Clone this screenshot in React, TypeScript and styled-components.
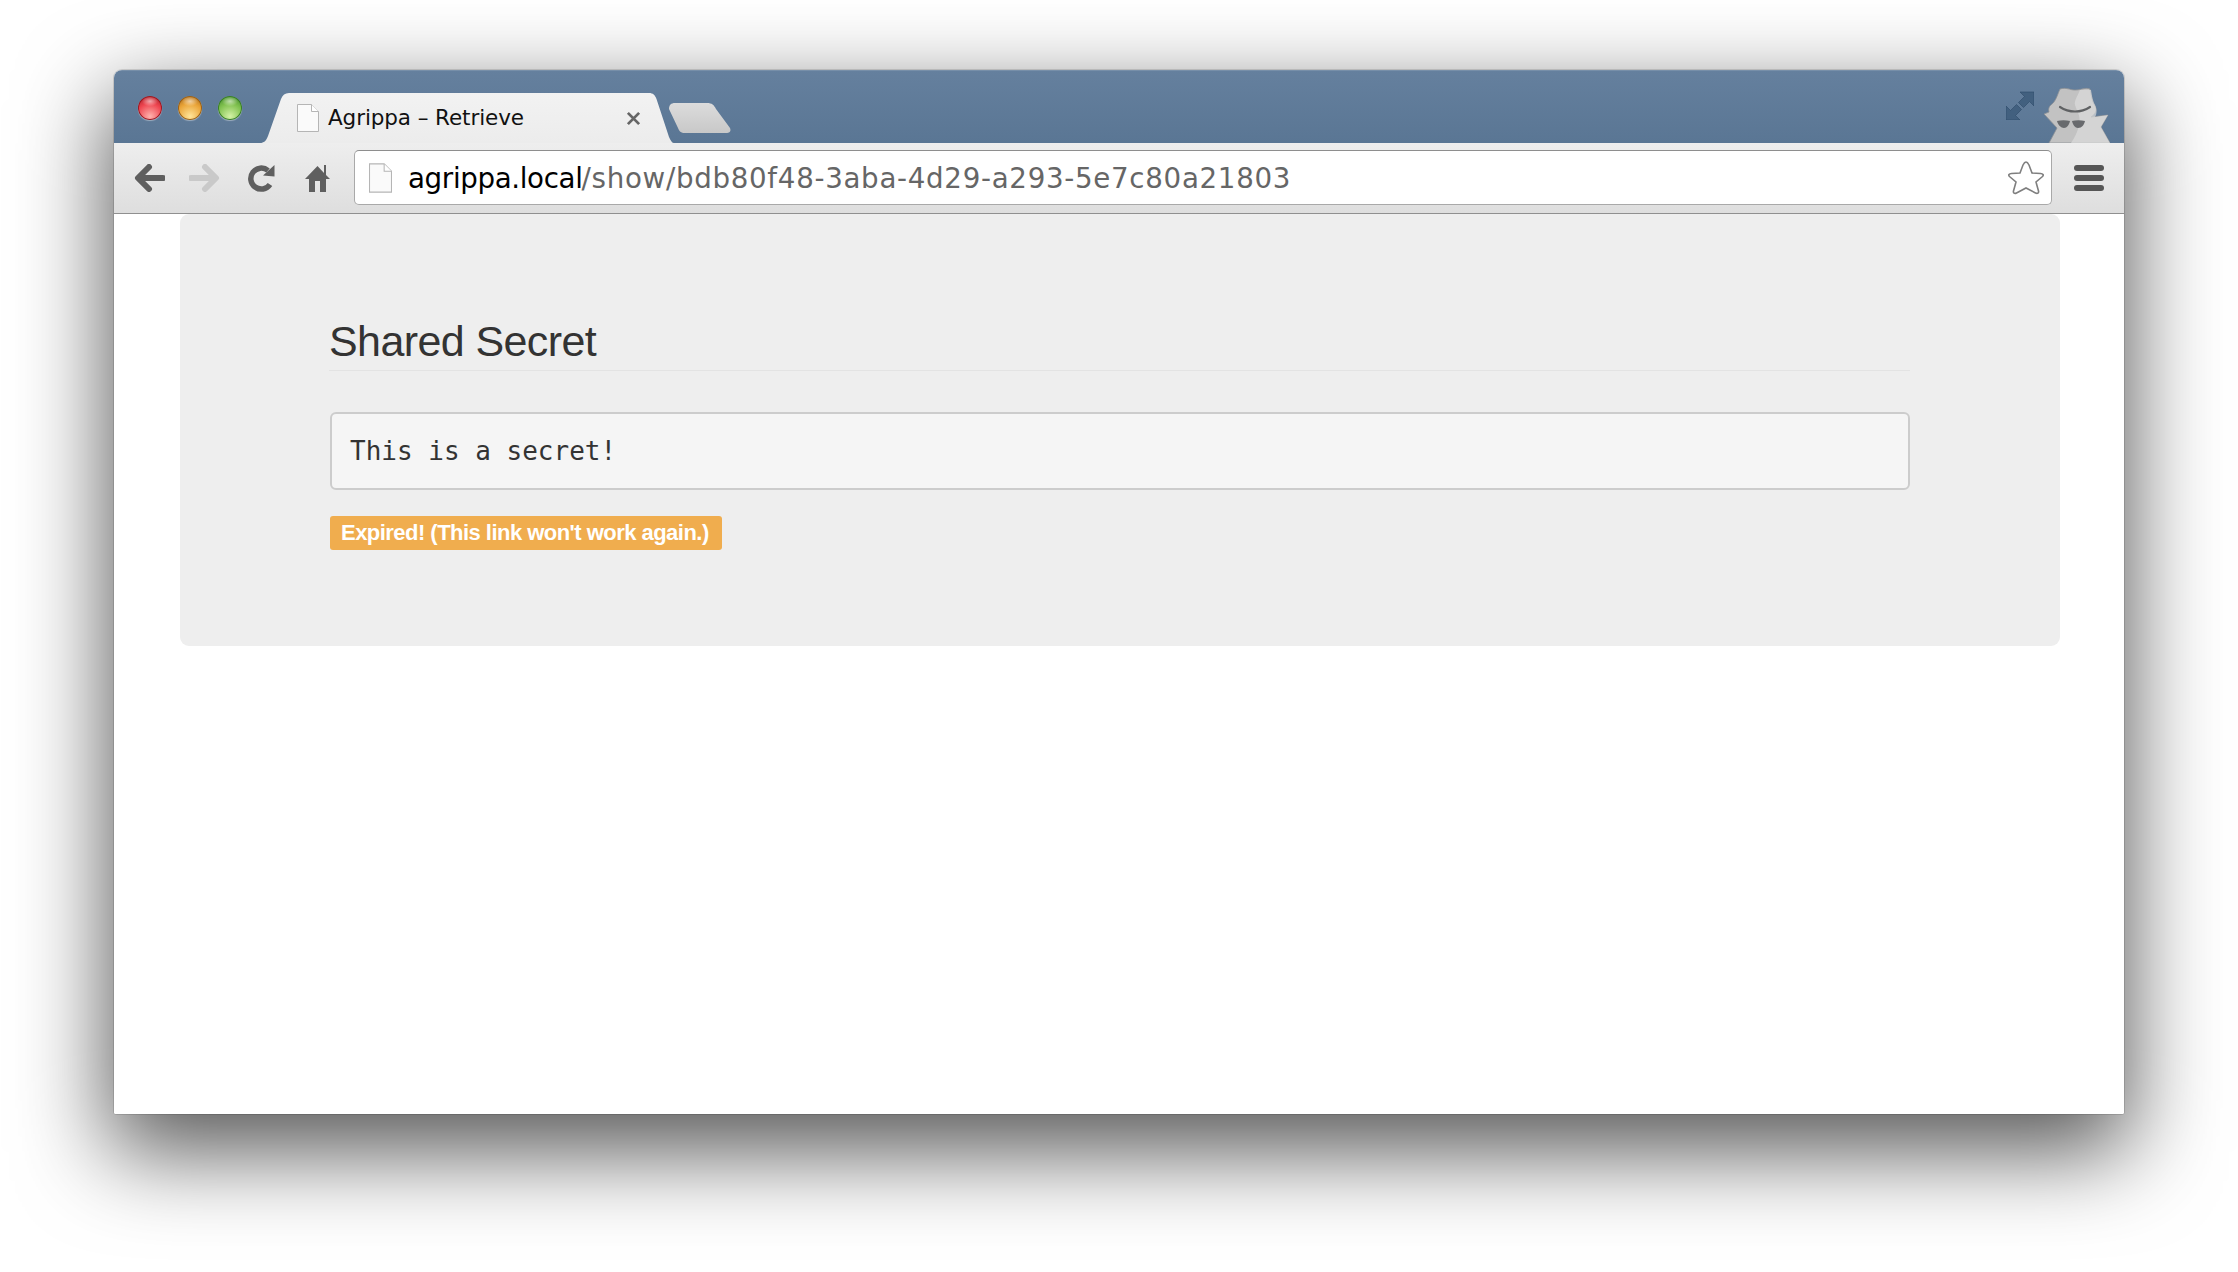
import React from "react";
import styled, { createGlobalStyle } from "styled-components";

const Global = createGlobalStyle`
  html, body { margin: 0; padding: 0; background: #fff; }
  body { width: 2238px; height: 1272px; overflow: hidden; font-family: "Liberation Sans", Arial, sans-serif; }
`;

const Stage = styled.div`
  box-sizing: border-box;
  width: 2238px;
  height: 1272px;
  padding: 70px 114px 158px 114px;
`;

const ShadowWrap = styled.div`
  height: 100%;
  border-radius: 8px 8px 3px 3px;
  box-shadow: 0 33px 90px 5px rgba(0, 0, 0, 0.66), 0 0 0 1px rgba(0, 0, 0, 0.12);
`;

const Window = styled.div`
  height: 100%;
  display: flex;
  flex-direction: column;
  border-radius: 8px 8px 2px 2px;
  overflow: hidden;
  background: #fff;
`;

const TitleBar = styled.div`
  height: 73px;
  flex: none;
  display: flex;
  align-items: flex-start;
  background: linear-gradient(#65809e, #5a7694);
  box-shadow: inset 0 1px 0 rgba(255, 255, 255, 0.12);
`;

const Lights = styled.div`
  display: flex;
  gap: 16px;
  padding: 26px 0 0 24px;
  width: 146px;
  box-sizing: border-box;
  flex: none;
`;

const Light = styled.span<{ $hi: string; $mid: string; $lo: string }>`
  width: 24px;
  height: 24px;
  border-radius: 50%;
  background:
    radial-gradient(ellipse 8px 5px at 50% 22%, rgba(255, 255, 255, 0.55), transparent),
    radial-gradient(circle at 50% 85%, ${p => p.$hi} 0, ${p => p.$mid} 55%, ${p => p.$lo} 100%);
  box-shadow: 0 1px 1px rgba(255, 255, 255, 0.4), inset 0 0 0 1px ${p => p.$lo};
`;

const Tab = styled.div`
  width: 414px;
  height: 50px;
  margin-top: 23px;
  flex: none;
  display: flex;
  align-items: center;
  box-sizing: border-box;
  padding: 0 0 0 37px;
  background: linear-gradient(#f2f2f2, #ececec);
  clip-path: path("M0 50 C4 50 6 48 8 43 L21 6 C22.500 2 25 0 29 0 L389 0 C393 0 395 2 396.500 6 L409 44 C411 48 412 50 414 50 Z");
`;

const TabTitle = styled.span`
  margin: 0 0 2px 9px;
  width: 298px;
  font: 21.500px "DejaVu Sans", sans-serif;
  letter-spacing: -0.1px;
  color: #111;
  white-space: nowrap;
`;

const TabClose = styled.span`
  display: flex;
  color: #666;
`;

const NewTab = styled.div`
  width: 62px;
  height: 30px;
  margin: 33px 0 0 -5px;
  flex: none;
  background: linear-gradient(#dcdcdc, #c8c8c8);
  clip-path: path("M0 6 C0 2 2 0 6 0 L38 0 C43 0 45 2 47 6 L61 25 C62.500 29 60 30 57 30 L16 30 C12 30 10 28 9 25 Z");
`;

const Spacer = styled.div`
  flex: 1;
`;

const FullScreen = styled.svg`
  width: 28px;
  height: 29px;
  margin: 21px 9px 0 0;
  flex: none;
`;

const Spy = styled.svg`
  width: 67px;
  height: 56px;
  margin: 17px 14px 0 0;
  flex: none;
`;

const Toolbar = styled.div`
  height: 71px;
  flex: none;
  box-sizing: border-box;
  display: flex;
  align-items: center;
  padding: 0 20px 1px 20px;
  background: linear-gradient(#eeeeee, #dedede);
  border-bottom: 1px solid #8f8f8f;
`;

const NavIcon = styled.svg<{ $w: number; $gap: number }>`
  width: ${p => p.$w}px;
  height: 28px;
  margin-right: ${p => p.$gap}px;
  flex: none;
`;

const Omnibox = styled.div`
  flex: 1;
  height: 55px;
  box-sizing: border-box;
  display: flex;
  align-items: center;
  padding: 0 7px 0 14px;
  background: #fff;
  border: 1px solid #a9a9a9;
  border-top-color: #8e8e8e;
  border-radius: 5px;
`;

const Url = styled.div`
  flex: 1;
  margin: 2px 0 0 16px;
  font: 27.700px "DejaVu Sans", sans-serif;
  letter-spacing: -0.35px;
  white-space: nowrap;
`;

const Host = styled.span`
  color: #000;
`;

const UrlPath = styled.span`
  margin-left: -1px;
  color: #666;
  letter-spacing: 0.7px;
`;

const Star = styled.svg`
  width: 36px;
  height: 35px;
  flex: none;
`;

const Menu = styled.div`
  width: 30px;
  margin-left: 22px;
  display: flex;
  flex-direction: column;
  gap: 4px;
  flex: none;
`;

const MenuBar = styled.span`
  height: 6px;
  border-radius: 3px;
  background: #565656;
`;

const Page = styled.div`
  flex: 1;
  padding: 0 64px 0 66px;
  background: #fff;
`;

const Panel = styled.div`
  box-sizing: border-box;
  height: 432px;
  padding: 96px 150px 0;
  background: #eeeeee;
  border-radius: 9px;
`;

const Heading = styled.h2`
  margin: 0 0 0 -1px;
  height: 61px;
  box-sizing: border-box;
  font: 400 43px/62px "Liberation Sans", Arial, sans-serif;
  letter-spacing: -0.6px;
  color: #333;
  border-bottom: 1px solid #e3e3e3;
`;

const SecretBox = styled.pre`
  margin: 41px 0 0;
  height: 78px;
  box-sizing: border-box;
  padding: 0 18px;
  font: 26px/74px "DejaVu Sans Mono", monospace;
  color: #333;
  background: #f5f5f5;
  border: 2px solid #cccccc;
  border-radius: 6px;
`;

const Badge = styled.div`
  display: inline-block;
  margin-top: 26px;
  height: 34px;
  padding: 0 13px 0 11px;
  font: 700 22px/33px "Liberation Sans", Arial, sans-serif;
  letter-spacing: -0.53px;
  color: #fff;
  background: #f0ad4e;
  border-radius: 3px;
  white-space: nowrap;
`;

const FileIcon = ({ w, h }: { w: number; h: number }) => (
  <svg width={w} height={h} viewBox="0 0 22 28" style={{ flex: "none" }}>
    <path d="M.5.5h14l7 7v20H.5z" fill="#fafafa" stroke="#b5b5b5" />
    <path d="M14.500.5v7h7" fill="#fff" stroke="#b5b5b5" />
  </svg>
);

export default function App() {
  return (
    <Stage>
      <Global />
      <ShadowWrap>
        <Window>
          <TitleBar>
            <Lights>
              <Light $hi="#ffb3ae" $mid="#ee4550" $lo="#9c1820" />
              <Light $hi="#ffe59a" $mid="#eaa438" $lo="#9c6016" />
              <Light $hi="#d4f2a6" $mid="#7fc04e" $lo="#377f26" />
            </Lights>
            <Tab>
              <FileIcon w={22} h={28} />
              <TabTitle>Agrippa – Retrieve</TabTitle>
              <TabClose>
                <svg width="15" height="15" viewBox="0 0 16 16">
                  <path d="M2 2l12 12M14 2L2 14" stroke="#666" strokeWidth="3" />
                </svg>
              </TabClose>
            </Tab>
            <NewTab />
            <Spacer />
            <FullScreen viewBox="0 0 28 29">
              <path
                d="M14 1h14v14l-4.500-4.500-6 6-5-5 6-6zM0 15l4.500 4.500 6-6 5 5-6 6L14 29H0z"
                fill="#42607f"
                stroke="#2e4a68"
                strokeWidth=".6"
              />
            </FullScreen>
            <Spy viewBox="0 0 67 56">
              <path
                d="M17 2c6-2 10 1 15 1 6 0 11-3 15-1 1 4 2 12 4 15 2 3 3 6 1 9-1 2-3 3-4 4l17-2-7 12 9 16H6l8-15L1 27l5-2c-1-3 0-6 3-8 4-3 6-11 8-15z"
                fill="#c2c2c2"
                stroke="#8b8f94"
                strokeWidth=".8"
              />
              <path d="M37 3c-3 7-6 11-5 15 2 7 6 10 4 20-1 6-4 12-8 18h39l-9-16 7-12-13 2c2-3 2-8 0-12-2-4-3-8-4-15z" fill="#dcdcdc" opacity=".7" />
              <path d="M17 20c9 6 21 6 30 0" fill="none" stroke="#5f6163" strokeWidth="2.200" strokeLinecap="round" />
              <path
                d="M14 34c4-1 9-1 13 0-1 4-3 7-6 7s-6-3-7-7zM29 34c4-1 9-1 13 0-1 4-3 7-7 7-3 0-5-3-6-7z"
                fill="#686a6d"
              />
            </Spy>
          </TitleBar>
          <Toolbar>
            <NavIcon $w={31} $gap={24} viewBox="0 0 31 28">
              <path d="M29 14H6M15 3L4 14l11 11" fill="none" stroke="#5f5f5f" strokeWidth="6" strokeLinecap="round" strokeLinejoin="round" />
            </NavIcon>
            <NavIcon $w={31} $gap={28} viewBox="0 0 31 28">
              <path d="M2 14h23M16 3l11 11-11 11" fill="none" stroke="#c9c9c9" strokeWidth="6" strokeLinecap="round" strokeLinejoin="round" />
            </NavIcon>
            <NavIcon $w={27} $gap={30} viewBox="0 0 27 28">
              <path d="M22 20.500A10.500 10.500 0 1 1 20 6.500" fill="none" stroke="#5f5f5f" strokeWidth="5.500" />
              <path d="M15 11.500L26.500 1v11.500z" fill="#5f5f5f" />
            </NavIcon>
            <NavIcon $w={25} $gap={24} viewBox="0 0 25 28">
              <path d="M12.500 2L0 15h4v13h6V17h5v11h6V15h4l-4-4V1h-2v8z" fill="#5f5f5f" />
            </NavIcon>
            <Omnibox>
              <FileIcon w={23} h={30} />
              <Url>
                <Host>agrippa.local</Host>
                <UrlPath>/show/bdb80f48-3aba-4d29-a293-5e7c80a21803</UrlPath>
              </Url>
              <Star viewBox="0 0 36 35">
                <path
                  d="M18 2c1.500 0 2 1 3 3l3 8 8.500.5c2.500.2 3.500 1.500 2 3L28 22l2.500 9c.5 2-1 3-3 2L18 28l-9.500 5c-2 1-3.500 0-3-2L8 22 1.500 16.500c-1.500-1.500-.5-2.800 2-3L12 13l3-8c1-2 1.500-3 3-3z"
                  fill="#fff"
                  stroke="#7f7f7f"
                  strokeWidth="1.600"
                />
              </Star>
            </Omnibox>
            <Menu>
              <MenuBar />
              <MenuBar />
              <MenuBar />
            </Menu>
          </Toolbar>
          <Page>
            <Panel>
              <Heading>Shared Secret</Heading>
              <SecretBox>This is a secret!</SecretBox>
              <Badge>Expired! (This link won't work again.)</Badge>
            </Panel>
          </Page>
        </Window>
      </ShadowWrap>
    </Stage>
  );
}
